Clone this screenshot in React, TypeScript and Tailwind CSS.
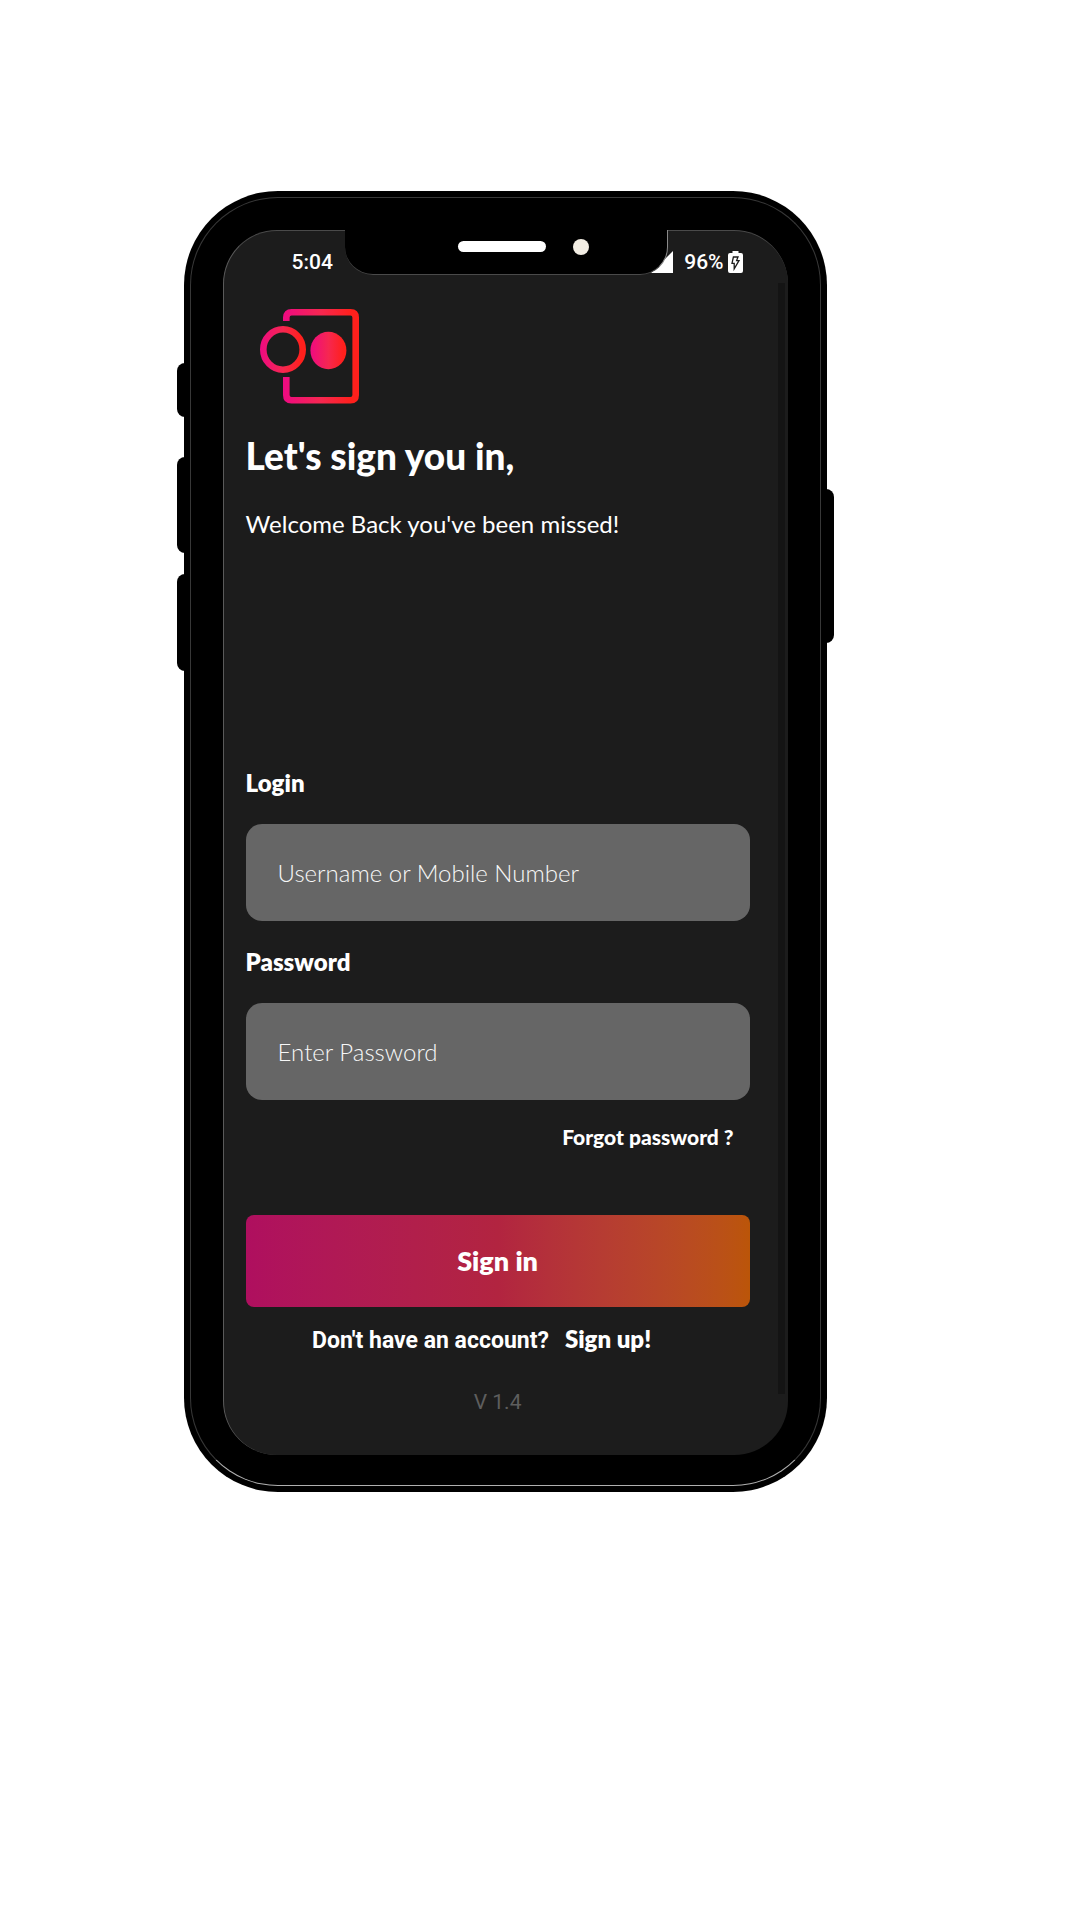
import type { ReactNode } from 'react';

function Logo() {
  return (
    <svg className="block h-[97px] w-[102px]" viewBox="0 0 102 97" fill="none" role="img" aria-label="App logo">
      <defs>
        <linearGradient id="frame" gradientUnits="userSpaceOnUse" x1="24" y1="0" x2="100" y2="0">
          <stop offset="0" stopColor="#ee0a82" />
          <stop offset="0.5" stopColor="#f62750" />
          <stop offset="0.9" stopColor="#ff201c" />
        </linearGradient>
        <linearGradient id="ring" gradientUnits="userSpaceOnUse" x1="1" y1="0" x2="47" y2="0">
          <stop offset="0" stopColor="#ee0a82" />
          <stop offset="0.5" stopColor="#f62750" />
          <stop offset="0.9" stopColor="#ff201c" />
        </linearGradient>
        <linearGradient id="disc" gradientUnits="userSpaceOnUse" x1="51" y1="0" x2="88" y2="0">
          <stop offset="0" stopColor="#ee0a82" />
          <stop offset="0.5" stopColor="#f62750" />
          <stop offset="0.9" stopColor="#ff201c" />
        </linearGradient>
      </defs>
      <path
        d="M27.3 13V9.5Q27.3 4.3 32.5 4.3H91.5Q96.7 4.3 96.7 9.5V87Q96.7 92.3 91.5 92.3H32.5Q27.3 92.3 27.3 87V69"
        stroke="url(#frame)"
        strokeWidth="6.6"
      />
      <ellipse cx="24" cy="41.5" rx="19.7" ry="20.2" stroke="url(#ring)" strokeWidth="6.6" />
      <ellipse cx="69.4" cy="42.5" rx="18" ry="18.7" fill="url(#disc)" />
    </svg>
  );
}

function BatteryIcon() {
  return (
    <svg className="block h-[22px] w-[15px]" viewBox="0 0 15 22" aria-hidden="true">
      <path
        d="M4.5 0H10.5V2H13Q15 2 15 4V20Q15 22 13 22H2Q0 22 0 20V4Q0 2 2 2H4.5Z"
        fill="#fff"
      />
      <path d="M5.4 6H10L8.6 9.6H11L6.2 17.8V12.4H4Z" fill="#fff" stroke="#1c1c1c" strokeWidth="1.3" />
    </svg>
  );
}

function StatusBar() {
  return (
    <div className="flex items-center justify-between pr-[45px] pl-[68px] font-['Roboto',sans-serif] text-[21px] leading-7 font-medium">
      <span>5:04</span>
      <div className="flex items-center">
        <svg className="mr-[11px] block size-[22px]" viewBox="0 0 22 22" aria-hidden="true">
          <path d="M22 0V22H0Z" fill="#fff" />
        </svg>
        <span className="mr-1">96%</span>
        <BatteryIcon />
      </div>
    </div>
  );
}

function Notch() {
  return (
    <div className="absolute -top-px left-[121px] flex h-[45px] w-[323px] items-start rounded-b-[28px] border-r border-b border-r-[#8a8a8a] border-b-[#4a4a4a] bg-black pt-[9px] pl-[113px]">
      <span className="mt-[2px] h-[11px] w-[88px] rounded-full bg-white" />
      <span className="ml-[27px] size-4 rounded-full bg-[#f3eee4]" />
    </div>
  );
}

function Field({ id, label, type, placeholder }: { id: string; label: string; type: string; placeholder: string }) {
  return (
    <div className="flex flex-col gap-[25px]">
      <label htmlFor={id} className="text-2xl leading-8 font-extrabold">
        {label}
      </label>
      <input
        id={id}
        type={type}
        placeholder={placeholder}
        className="h-[97px] w-full rounded-2xl bg-[#666666] px-8 text-2xl font-light text-white outline-none placeholder:text-[#f8f8f8]"
      />
    </div>
  );
}

function SignInScreen() {
  return (
    <div className="relative rounded-[54px] border-t border-l border-t-[#4a4a4a] border-l-[#5a5a5a] bg-[#1c1c1c] pt-[17px] pb-[39px] font-['Lato',sans-serif] text-white">
      <StatusBar />
      <Notch />
      <div className="absolute top-[52px] right-[3px] bottom-[61px] w-[7px] bg-[#141414]" />

      <main className="mt-8 pr-[38px] pl-[22px]">
        <div className="pl-[13px]">
          <Logo />
        </div>
        <h1 className="mt-[29px] text-[37px] leading-[44px] font-black">Let's sign you in,</h1>
        <p className="mt-[30px] text-2xl leading-8">Welcome Back you've been missed!</p>

        <form className="mt-[227px] flex flex-col">
          <div className="flex flex-col gap-[25px]">
            <Field id="login" label="Login" type="text" placeholder="Username or Mobile Number" />
            <Field id="password" label="Password" type="password" placeholder="Enter Password" />
          </div>
          <a href="#forgot" className="mt-[23px] mr-4 self-end text-[21px] leading-7 font-black">
            Forgot password ?
          </a>
          <button
            type="button"
            className="mt-16 h-[92px] w-full rounded-lg bg-linear-to-r from-[#af0f5f] via-[#b22440] to-[#bb5508] text-[27px] font-extrabold"
          >
            Sign in
          </button>
        </form>

        <p className="mt-4 flex h-8 items-baseline justify-center gap-4 pr-8 leading-8">
          <span className="font-['Roboto',sans-serif] text-[23px] font-bold">Don't have an account?</span>
          <a href="#signup" className="text-2xl leading-8 font-extrabold">
            Sign up!
          </a>
        </p>
        <p className="mt-[33px] text-center font-['Roboto',sans-serif] text-[21px] leading-7 text-[#5e5e5e]">V 1.4</p>
      </main>
    </div>
  );
}

function Phone({ children }: { children: ReactNode }) {
  return (
    <div className="relative w-full max-w-[643px]">
      <span className="absolute top-[172px] -left-[7px] h-[54px] w-4 rounded-lg bg-black" />
      <span className="absolute top-[266px] -left-[7px] h-[96px] w-4 rounded-lg bg-black" />
      <span className="absolute top-[383px] -left-[7px] h-[97px] w-4 rounded-lg bg-black" />
      <span className="absolute top-[298px] -right-[7px] h-[154px] w-4 rounded-lg bg-black" />
      <div className="relative rounded-[94px] bg-black p-[6px]">
        <div className="rounded-[88px] border border-[#383838] border-b-[#b0b0b0] px-8 pt-8 pb-[30px]">{children}</div>
      </div>
    </div>
  );
}

export default function App() {
  return (
    <div className="min-h-screen bg-white pt-[191px] pb-16 pl-[17%]">
      <Phone>
        <SignInScreen />
      </Phone>
    </div>
  );
}
